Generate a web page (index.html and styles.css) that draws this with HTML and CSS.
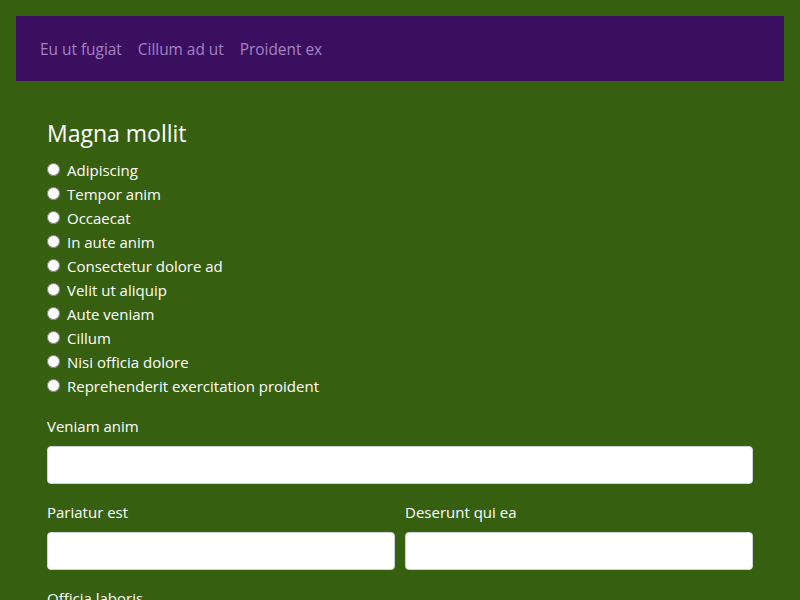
FILE: index.html
```html
<!DOCTYPE html>
<html>
<head>
<meta charset="utf-8">
<link rel="stylesheet" href="styles.css">
</head>
<body>
<div class="page">
  <nav class="nav">
    <a class="nav-link" href="#">Eu ut fugiat</a>
    <a class="nav-link" href="#">Cillum ad ut</a>
    <a class="nav-link" href="#">Proident ex</a>
  </nav>
  <main class="content">
    <h2 class="title">Magna mollit</h2>
    <div class="radios">
      <label class="radio"><input type="radio" name="r"><span>Adipiscing</span></label>
      <label class="radio"><input type="radio" name="r"><span>Tempor anim</span></label>
      <label class="radio"><input type="radio" name="r"><span>Occaecat</span></label>
      <label class="radio"><input type="radio" name="r"><span>In aute anim</span></label>
      <label class="radio"><input type="radio" name="r"><span>Consectetur dolore ad</span></label>
      <label class="radio"><input type="radio" name="r"><span>Velit ut aliquip</span></label>
      <label class="radio"><input type="radio" name="r"><span>Aute veniam</span></label>
      <label class="radio"><input type="radio" name="r"><span>Cillum</span></label>
      <label class="radio"><input type="radio" name="r"><span>Nisi officia dolore</span></label>
      <label class="radio"><input type="radio" name="r"><span>Reprehenderit exercitation proident</span></label>
    </div>
    <div class="field">
      <label class="label">Veniam anim</label>
      <input class="input" type="text">
    </div>
    <div class="row">
      <div class="field">
        <label class="label">Pariatur est</label>
        <input class="input" type="text">
      </div>
      <div class="field">
        <label class="label">Deserunt qui ea</label>
        <input class="input" type="text">
      </div>
    </div>
    <div class="field">
      <label class="label">Officia laboris</label>
      <input class="input" type="text">
    </div>
  </main>
</div>
</body>
</html>
```
FILE: styles.css
```css
html, body {
  margin: 0;
  padding: 0;
  background: #36600f;
  overflow: hidden;
}
body {
  font-family: "Open Sans", "Noto Sans", sans-serif;
  font-size: 15px;
  color: #ffffff;
}
.page {
  padding: 16px;
}
.nav {
  background: #3b0f5f;
  height: 65px;
  display: flex;
  align-items: center;
  padding: 2px 16px 0;
  box-sizing: border-box;
}
.nav-link {
  color: #a383c2;
  text-decoration: none;
  padding: 0 8px;
  line-height: 24px;
  font-size: 15.4px;
}
.content {
  padding: 38px 31px 0;
}
.title {
  font-size: 23px;
  font-weight: 400;
  line-height: 29px;
  margin: 0 0 10px;
}
.radios {
  display: flex;
  flex-direction: column;
  margin-bottom: 16px;
}
.radio {
  display: flex;
  align-items: center;
  height: 24px;
  gap: 7px;
}
.radio input {
  margin: 0;
  width: 13px;
  height: 13px;
  position: relative;
  top: -1px;
}
.field {
  display: flex;
  flex-direction: column;
  margin-bottom: 16px;
  flex: 1;
}
.label {
  line-height: 24px;
  margin-bottom: 8px;
}
.input {
  height: 38px;
  box-sizing: border-box;
  border: 1px solid #ced4da;
  border-radius: 4px;
  background: #fff;
  margin: 0;
  width: 100%;
}
.row {
  display: flex;
  gap: 10px;
}
```
